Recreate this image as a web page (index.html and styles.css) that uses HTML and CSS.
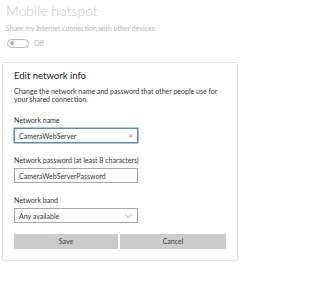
FILE: index.html
```html
<!DOCTYPE html>
<html lang="en">
<head>
    <meta charset="UTF-8">
    <title>Mobile hotspot</title>
    <link rel="stylesheet" href="styles.css">
</head>
<body>
    <div class="page">
        <h1 class="title">Mobile hotspot</h1>
        <div class="muted">Share my Internet connection with other devices</div>
        <div class="toggle-row">
            <span class="toggle"><span class="knob"></span></span>
            <span class="toggle-label">Off</span>
        </div>
    </div>

    <div class="dialog">
        <div class="dialog-title">Edit network info</div>
        <div class="dialog-text">Change the network name and password that other people use for your shared connection.</div>

        <div class="label">Network name</div>
        <div class="field focused">
            <span class="field-value">CameraWebServer</span>
            <span class="clear">&#x2715;</span>
        </div>

        <div class="label">Network password (at least 8 characters)</div>
        <div class="field">
            <span class="field-value">CameraWebServerPassword</span>
        </div>

        <div class="label">Network band</div>
        <div class="field">
            <span class="field-value">Any available</span>
            <svg class="chevron" width="7" height="4" viewBox="0 0 7 4"><path d="M0.5 0.5 L3.5 3.5 L6.5 0.5" fill="none" stroke="#999" stroke-width="0.8"/></svg>
        </div>

        <div class="buttons">
            <div class="btn save">Save</div>
            <div class="btn cancel">Cancel</div>
        </div>
    </div>
</body>
</html>
```

FILE: styles.css
```css
body {
    margin: 0;
    font-family: "Segoe UI", Lato, "Open Sans", sans-serif;
    background: #fff;
    color: #222;
}

.page {
    padding-left: 6px;
}

.title {
    margin: 0;
    font-size: 14px;
    font-weight: 300;
    line-height: 22px;
    color: #c6c6c6;
}

.muted {
    margin-top: 1px;
    font-size: 7px;
    line-height: 10px;
    color: #b4b4b4;
}

.toggle-row {
    display: flex;
    align-items: center;
    margin-top: 4px;
    height: 12px;
    padding-left: 1px;
}

.toggle {
    width: 18px;
    height: 7px;
    border: 1px solid #bdbdbd;
    border-radius: 5px;
    display: flex;
    align-items: center;
    padding-left: 2px;
}

.knob {
    width: 4px;
    height: 4px;
    border-radius: 50%;
    background: #b0b0b0;
}

.toggle-label {
    margin-left: 5px;
    font-size: 7px;
    color: #b4b4b4;
}

.dialog {
    width: 212px;
    margin: 13px 0 0 2px;
    padding: 6px 11px 11px 11px;
    border: 1px solid #e4e4e4;
    box-shadow: 0 0 1px rgba(0, 0, 0, 0.06);
}

.dialog-title {
    font-size: 9.5px;
    line-height: 14px;
    color: #222;
}

.dialog-text {
    margin-top: 4px;
    font-size: 7px;
    line-height: 8px;
    color: #333;
}

.label {
    margin-top: 12px;
    font-size: 7px;
    line-height: 10px;
    color: #333;
}

.field {
    display: flex;
    align-items: center;
    justify-content: space-between;
    width: 114px;
    height: 13px;
    margin-top: 3px;
    padding: 0 4px;
    border: 1px solid #a8a8a8;
}

.field.focused {
    border-color: #5b8ea6;
    box-shadow: 0 0 0 0.5px #5b8ea6;
}

.field-value {
    font-size: 7px;
    color: #333;
}

.clear {
    font-size: 6px;
    color: #888;
}

.chevron {
    margin-right: 1px;
}

.buttons {
    display: flex;
    gap: 2px;
    margin-top: 11px;
}

.btn {
    height: 15px;
    line-height: 15px;
    text-align: center;
    font-size: 7px;
    color: #444;
    background: #cccccc;
}

.save {
    width: 104px;
}

.cancel {
    width: 106px;
}
```
